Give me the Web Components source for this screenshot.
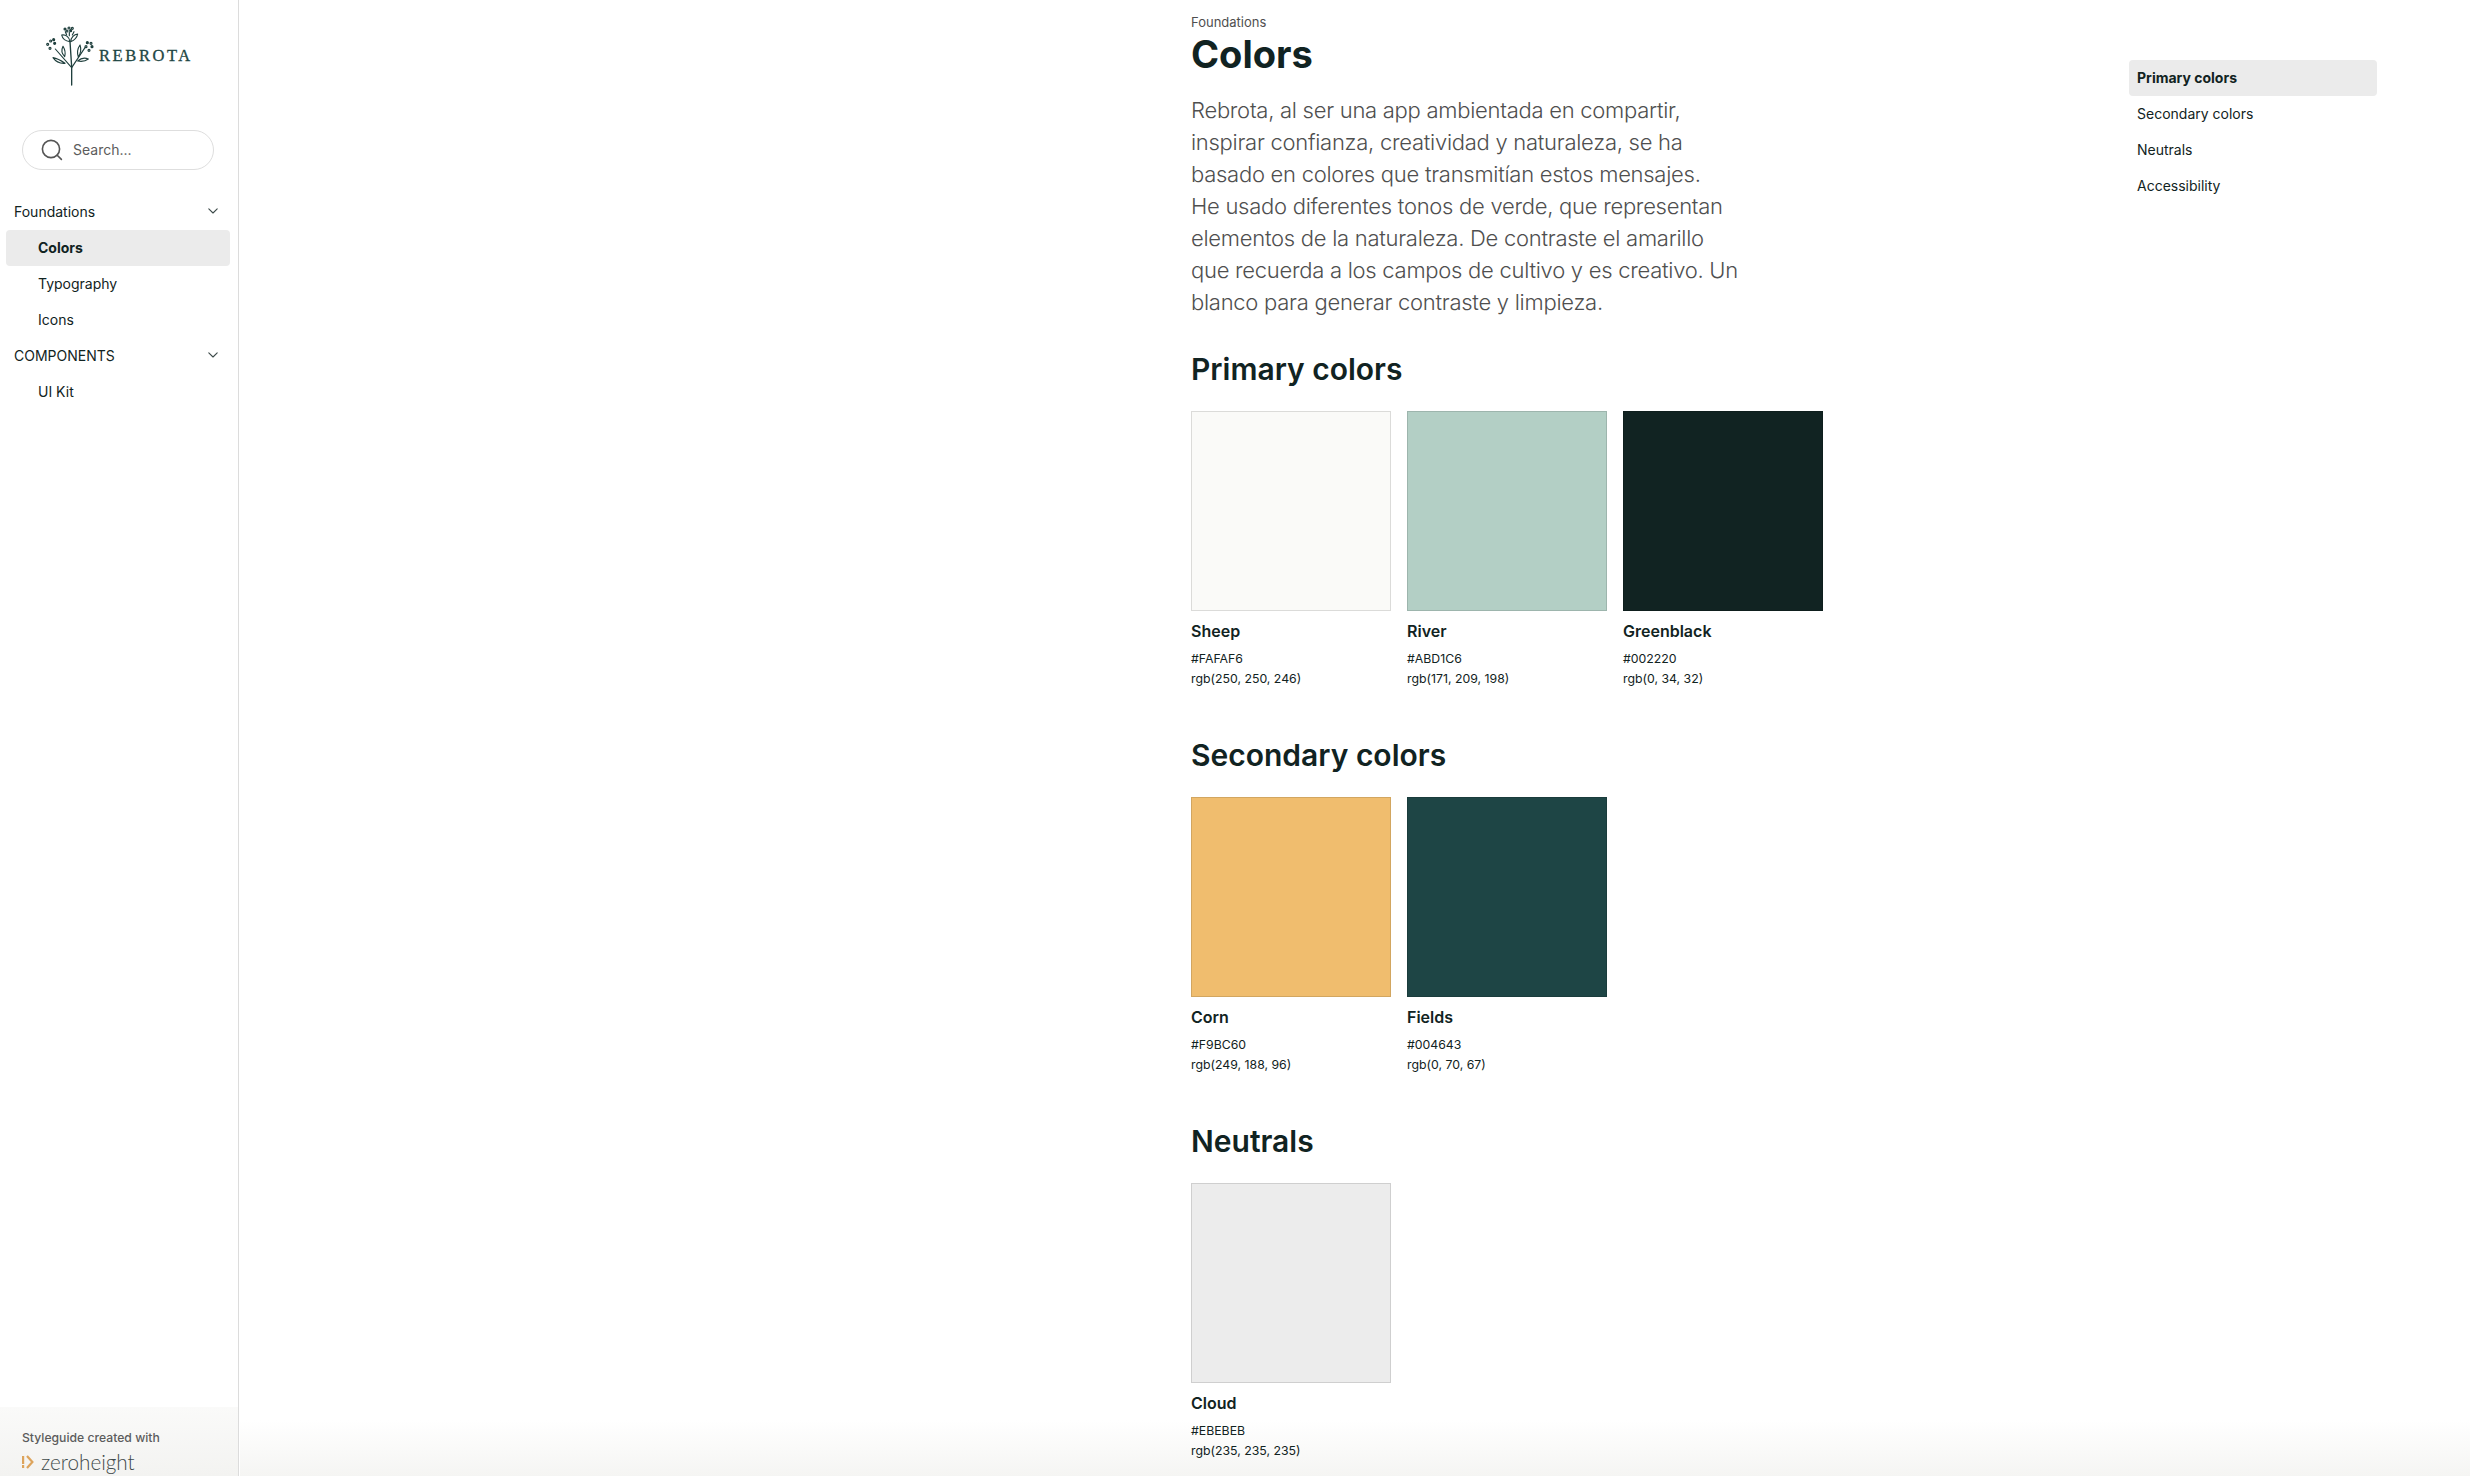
<!DOCTYPE html>
<html lang="es">
<head>
<meta charset="utf-8">
<title>Colors</title>
<style>
html, body { margin: 0; height: 100%; background: #fff; overflow: hidden; }
body { font-family: Inter, "Liberation Sans", sans-serif; color: #112322; }
</style>
</head>
<body>

<rb-app>
    <rb-sidebar slot="side">
        <rb-nav-group label="Foundations">
            <rb-nav-item active>Colors</rb-nav-item>
            <rb-nav-item>Typography</rb-nav-item>
            <rb-nav-item>Icons</rb-nav-item>
        </rb-nav-group>
        <rb-nav-group label="COMPONENTS">
            <rb-nav-item>UI Kit</rb-nav-item>
        </rb-nav-group>
    </rb-sidebar>

    <rb-page slot="main" crumb="Foundations" heading="Colors">
        <p slot="intro">Rebrota, al ser una app ambientada en compartir,<br>inspirar confianza, creatividad y naturaleza, se ha<br>basado en colores que transmitían estos mensajes.<br>He usado diferentes tonos de verde, que representan<br>elementos de la naturaleza. De contraste el amarillo<br>que recuerda a los campos de cultivo y es creativo. Un<br>blanco para generar contraste y limpieza.</p>

        <rb-section heading="Primary colors">
            <rb-swatch name="Sheep" hex="#FAFAF6" rgb="rgb(250, 250, 246)" fill="#fafaf8"></rb-swatch>
            <rb-swatch name="River" hex="#ABD1C6" rgb="rgb(171, 209, 198)" fill="#b3cfc5"></rb-swatch>
            <rb-swatch name="Greenblack" hex="#002220" rgb="rgb(0, 34, 32)" fill="#112322"></rb-swatch>
        </rb-section>
        <rb-section heading="Secondary colors">
            <rb-swatch name="Corn" hex="#F9BC60" rgb="rgb(249, 188, 96)" fill="#f0bd6e"></rb-swatch>
            <rb-swatch name="Fields" hex="#004643" rgb="rgb(0, 70, 67)" fill="#1e4545"></rb-swatch>
        </rb-section>
        <rb-section heading="Neutrals">
            <rb-swatch name="Cloud" hex="#EBEBEB" rgb="rgb(235, 235, 235)" fill="#ececec"></rb-swatch>
        </rb-section>
    </rb-page>

    <rb-toc slot="toc">
        <rb-toc-item active>Primary colors</rb-toc-item>
        <rb-toc-item>Secondary colors</rb-toc-item>
        <rb-toc-item>Neutrals</rb-toc-item>
        <rb-toc-item>Accessibility</rb-toc-item>
    </rb-toc>
</rb-app>

<script>
// ── App shell ───────────────────────────────────────────
class RbApp extends HTMLElement {
    connectedCallback() {
        this.attachShadow({ mode: 'open' }).innerHTML = `
<style>
:host {
    display: grid; grid-template-columns: 239px 1fr 341px;
    height: 1476px; overflow: hidden; position: relative;
}
::slotted(*) { z-index: 1; }
/* fade at the bottom of the page, behind the text */
.fade {
    position: absolute; left: 240px; right: 0; bottom: 0; height: 56px;
    background: linear-gradient(to bottom, rgba(245,245,243,0), #f5f5f3);
    pointer-events: none;
}
</style>
<div class="fade"></div>
<slot name="side"></slot>
<slot name="main"></slot>
<slot name="toc"></slot>`;
    }
}
customElements.define('rb-app', RbApp);

// ── Sidebar ─────────────────────────────────────────────
class RbSidebar extends HTMLElement {
    connectedCallback() {
        this.attachShadow({ mode: 'open' }).innerHTML = `
<style>
:host {
    display: flex; flex-direction: column;
    height: 1476px; border-right: 1px solid #dcdcdc; box-sizing: content-box;
}
.logo { display: flex; align-items: flex-start; height: 130px; padding-left: 30px; box-sizing: border-box; padding-top: 15px; }
.search { margin: 0 24px 0 22px; }
nav { padding: 24px 8px 0 6px; flex: 1; }
.foot {
    height: 69px; box-sizing: border-box; padding: 22px 0 0 22px;
    background: linear-gradient(to bottom, #fafaf9, #f3f3f1);
}
.foot small { display: block; font-size: 12.2px; line-height: 17px; font-weight: 500; color: #5c5c5c; }
</style>
<div class="logo"><rb-logo></rb-logo></div>
<div class="search"><rb-search></rb-search></div>
<nav><slot></slot></nav>
<div class="foot">
    <small>Styleguide created with</small>
    <rb-zeroheight></rb-zeroheight>
</div>`;
    }
}
customElements.define('rb-sidebar', RbSidebar);

class RbLogo extends HTMLElement {
    connectedCallback() {
        this.attachShadow({ mode: 'open' }).innerHTML = `
<style>
:host { display: flex; position: relative; width: 170px; height: 75px; }
svg { flex: none; width: 66px; height: 75px; }
span {
    font: 16.5px/1 "Liberation Serif", serif; letter-spacing: 2.6px;
    color: #1d4643; margin: 33px 0 0 3px; -webkit-text-stroke: .3px #1d4643;
}
</style>
<svg viewBox="0 0 198 225" fill="none" stroke="#1f3f3d" stroke-width="3.4" stroke-linecap="round" stroke-linejoin="round">
    <path d="M125 210V155L120 80" stroke-width="4"/>
    <path d="M125 158L76 102M125 158L165 98"/>
    <path d="M120 80C106 78 97 70 95 60C108 58 118 66 120 80Z"/>
    <path d="M122 80C132 76 141 68 143 57C132 58 123 68 122 80Z"/>
    <path d="M104 125C94 115 94 104 99 94C105 104 107 115 104 125Z"/>
    <path d="M105 145C92 136 80 130 69 128C78 141 92 146 105 145Z"/>
    <path d="M145 126C141 114 143 100 150 90C154 102 152 116 145 126Z"/>
    <path d="M143 138C152 130 164 127 175 132C166 139 154 140 143 138Z"/>
    <path d="M118 62V52M110 60L106 50M127 60L132 50"/>
    <circle cx="105" cy="42" r="3" fill="#1f3f3d"/><circle cx="117" cy="39" r="3"/><circle cx="127" cy="40" r="3"/>
    <circle cx="111" cy="48" r="3"/><circle cx="122" cy="47" r="3" fill="#1f3f3d"/>
    <circle cx="71" cy="74" r="3" fill="#1f3f3d"/><circle cx="62" cy="78" r="3"/><circle cx="53" cy="88" r="3"/>
    <circle cx="60" cy="100" r="3"/><circle cx="74" cy="85" r="3" fill="#1f3f3d"/>
    <circle cx="172" cy="83" r="3" fill="#1f3f3d"/><circle cx="183" cy="85" r="3"/><circle cx="186" cy="95" r="3" fill="#1f3f3d"/>
    <circle cx="177" cy="106" r="3"/><circle cx="168" cy="95" r="3"/>
</svg>
<span>REBROTA</span>`;
    }
}
customElements.define('rb-logo', RbLogo);

class RbSearch extends HTMLElement {
    connectedCallback() {
        this.attachShadow({ mode: 'open' }).innerHTML = `
<style>
:host {
    display: flex; align-items: center; gap: 10px;
    height: 40px; box-sizing: border-box; padding-left: 18px;
    border: 1px solid #dedede; border-radius: 20px;
    font-size: 14px; color: #5c5c5c;
}
svg { width: 22px; height: 22px; flex: none; }
span { margin-bottom: 1px; }
</style>
<svg viewBox="0 0 22 22" fill="none" stroke="#555" stroke-width="1.6" stroke-linecap="round">
    <circle cx="10" cy="10" r="8.6"/><path d="M16.2 16.2L20.4 20.4"/>
</svg>
<span>Search...</span>`;
    }
}
customElements.define('rb-search', RbSearch);

class RbNavGroup extends HTMLElement {
    connectedCallback() {
        this.attachShadow({ mode: 'open' }).innerHTML = `
<style>
:host { display: block; font-size: 14px; }
.head {
    display: flex; align-items: center; justify-content: space-between;
    height: 36px; box-sizing: border-box; padding: 0 12px 2px 8px;
}
svg { width: 10px; height: 6px; }
</style>
<div class="head">
    <span>${this.getAttribute('label')}</span>
    <svg viewBox="0 0 10 6" fill="none" stroke="#3c4a49" stroke-width="1.1" stroke-linecap="round" stroke-linejoin="round"><path d="M.8 .8L5 5L9.2 .8"/></svg>
</div>
<slot></slot>`;
    }
}
customElements.define('rb-nav-group', RbNavGroup);

class RbNavItem extends HTMLElement {
    connectedCallback() {
        this.attachShadow({ mode: 'open' }).innerHTML = `
<style>
:host {
    display: flex; align-items: center; height: 36px; box-sizing: border-box;
    padding: 0 0 2px 32px; border-radius: 4px; font-size: 14px;
}
:host([active]) { background: #ebebeb; font-weight: 700; }
</style>
<slot></slot>`;
    }
}
customElements.define('rb-nav-item', RbNavItem);

class RbZeroheight extends HTMLElement {
    connectedCallback() {
        this.attachShadow({ mode: 'open' }).innerHTML = `
<style>
:host { display: flex; align-items: center; gap: 7px; height: 24px; margin-top: 4px; }
svg { width: 12px; height: 14px; flex: none; }
span { font: 300 20.7px/24px Lato, sans-serif; color: #3f4a4a; }
</style>
<svg viewBox="0 0 12 14" fill="none" stroke="#dda45c" stroke-width="2.2"><path d="M1.1 1V13" stroke-dasharray="8 1"/><path d="M5 1L10.4 7L5 13"/></svg>
<span>zeroheight</span>`;
    }
}
customElements.define('rb-zeroheight', RbZeroheight);

// ── Content ─────────────────────────────────────────────
class RbPage extends HTMLElement {
    connectedCallback() {
        this.attachShadow({ mode: 'open' }).innerHTML = `
<style>
:host { display: block; padding: 14px 0 0 952px; }
.crumb { font-size: 13px; line-height: 16px; color: #4f4f4f; }
h1 { margin: 0; font-size: 38px; line-height: 48px; font-weight: 700; }
::slotted(p) {
    margin: 16px 0 0; font-size: 22px; line-height: 32px; font-weight: 300;
    letter-spacing: -.27px; color: #4f4f4f; white-space: nowrap;
}
</style>
<div class="crumb">${this.getAttribute('crumb')}</div>
<h1>${this.getAttribute('heading')}</h1>
<slot name="intro"></slot>
<slot></slot>`;
    }
}
customElements.define('rb-page', RbPage);

class RbSection extends HTMLElement {
    connectedCallback() {
        this.attachShadow({ mode: 'open' }).innerHTML = `
<style>
:host { display: block; padding-top: 31px; height: 355px; }
h2 { margin: 0 0 22px; font-size: 30px; line-height: 40px; font-weight: 600; }
.row { display: flex; gap: 16px; }
</style>
<h2>${this.getAttribute('heading')}</h2>
<div class="row"><slot></slot></div>`;
    }
}
customElements.define('rb-section', RbSection);

class RbSwatch extends HTMLElement {
    connectedCallback() {
        this.attachShadow({ mode: 'open' }).innerHTML = `
<style>
:host { display: block; width: 200px; }
.chip {
    height: 200px; box-sizing: border-box;
    border: 1px solid rgba(0,0,0,.12);
    background: ${this.getAttribute('fill')};
}
.name { margin-top: 9px; font-size: 16px; line-height: 22px; font-weight: 600; }
.val { font-size: 12.3px; line-height: 20px; }
.name + .val { margin-top: 7px; }
</style>
<div class="chip"></div>
<div class="name">${this.getAttribute('name')}</div>
<div class="val">${this.getAttribute('hex')}</div>
<div class="val">${this.getAttribute('rgb')}</div>`;
    }
}
customElements.define('rb-swatch', RbSwatch);

// ── Table of contents ───────────────────────────────────
class RbToc extends HTMLElement {
    connectedCallback() {
        this.attachShadow({ mode: 'open' }).innerHTML = `
<style>
:host { display: block; padding: 60px 93px 0 0; }
</style>
<slot></slot>`;
    }
}
customElements.define('rb-toc', RbToc);

class RbTocItem extends HTMLElement {
    connectedCallback() {
        this.attachShadow({ mode: 'open' }).innerHTML = `
<style>
:host {
    display: flex; align-items: center; height: 36px; padding-bottom: 1px; box-sizing: border-box;
    padding-left: 8px; border-radius: 4px; font-size: 14px;
}
:host([active]) { background: #ebebeb; font-weight: 700; }
</style>
<slot></slot>`;
    }
}
customElements.define('rb-toc-item', RbTocItem);
</script>
</body>
</html>
